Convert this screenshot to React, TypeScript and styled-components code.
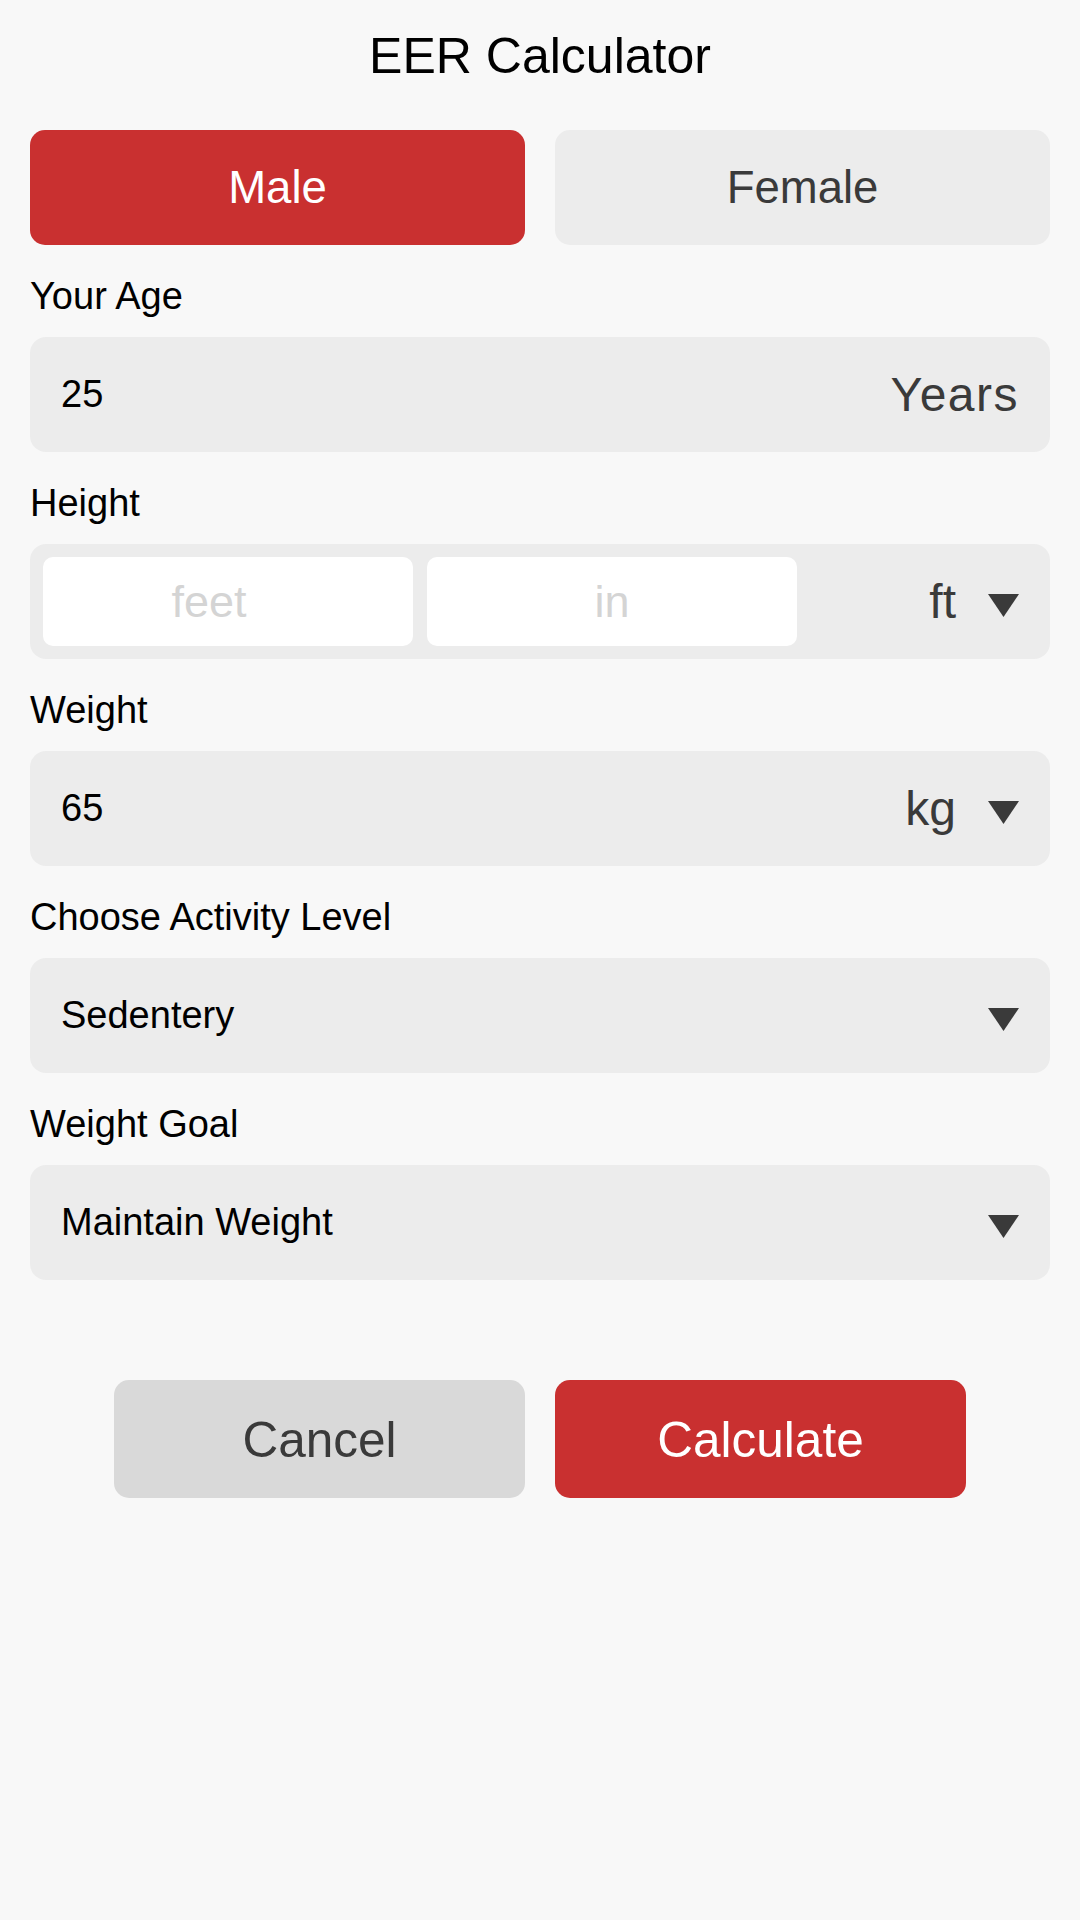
import React from "react";
import styled, { createGlobalStyle } from "styled-components";

const GlobalStyle = createGlobalStyle`
  html, body {
    margin: 0;
    padding: 0;
    background: #f8f8f8;
    font-family: "Liberation Sans", Arial, sans-serif;
  }
  * { box-sizing: border-box; }
`;

const Page = styled.div`
  min-height: 1920px;
  padding: 0 30px;
  background: #f8f8f8;
`;

const Title = styled.h1`
  margin: 0;
  padding-top: 26px;
  font-size: 50px;
  line-height: 60px;
  font-weight: 400;
  text-align: center;
  color: #000;
`;

const GenderRow = styled.div`
  margin-top: 44px;
  display: grid;
  grid-template-columns: 1fr 1fr;
  gap: 30px;
  height: 115px;
`;

const GenderButton = styled.button<{ $active?: boolean }>`
  border: none;
  border-radius: 15px;
  font-family: inherit;
  font-size: 45.5px;
  background: ${(p) => (p.$active ? "#c93030" : "#ececec")};
  color: ${(p) => (p.$active ? "#ffffff" : "#3a3a3a")};
  padding: 0;
`;

const Label = styled.div`
  margin-top: 29px;
  font-size: 38px;
  line-height: 44px;
  color: #000;
`;

const FieldBox = styled.div<{ $inset?: boolean }>`
  margin-top: 19px;
  height: 115px;
  border-radius: 16px;
  background: #ececec;
  display: flex;
  align-items: center;
  padding: ${(p) => (p.$inset ? "13px 31px 13px 13px" : "0 31px 0 31px")};
  gap: ${(p) => (p.$inset ? "14px" : "0")};
`;

const ValueInput = styled.input`
  flex: 1;
  min-width: 0;
  border: none;
  background: transparent;
  outline: none;
  padding: 0;
  font-family: inherit;
  font-size: 38px;
  color: #000;
`;

const SelectText = styled.span`
  flex: 1;
  font-size: 38px;
  color: #000;
`;

const SubInput = styled.input<{ $shift?: number }>`
  width: 370px;
  height: 89px;
  border: none;
  outline: none;
  border-radius: 10px;
  background: #ffffff;
  font-family: inherit;
  font-size: 45px;
  text-align: center;
  padding: 0 ${(p) => p.$shift ?? 0}px 0 0;
  color: #000;
  &::placeholder {
    color: #d4d4d4;
  }
`;

const UnitGroup = styled.div`
  margin-left: auto;
  display: flex;
  align-items: center;
  gap: 32px;
`;

const Unit = styled.span<{ $spaced?: boolean }>`
  font-size: 48px;
  color: #3a3a3a;
  letter-spacing: ${(p) => (p.$spaced ? "1.5px" : "0")};
`;

const CaretSvg = styled.svg`
  display: block;
  margin-top: 7px;
  flex: none;
`;

const Caret = () => (
  <CaretSvg width="31" height="23" viewBox="0 0 31 23">
    <polygon points="0,0 31,0 15.5,23" fill="#3a3a3a" />
  </CaretSvg>
);

const Actions = styled.div`
  margin-top: 100px;
  display: flex;
  justify-content: center;
  gap: 30px;
`;

const ActionButton = styled.button<{ $primary?: boolean }>`
  width: 411px;
  height: 118px;
  border: none;
  border-radius: 15px;
  padding: 0;
  font-family: inherit;
  font-size: 49.5px;
  background: ${(p) => (p.$primary ? "#c93030" : "#d9d9d9")};
  color: ${(p) => (p.$primary ? "#ffffff" : "#3a3a3a")};
`;

export default function App() {
  return (
    <>
      <GlobalStyle />
      <Page>
        <Title>EER Calculator</Title>
        <GenderRow>
          <GenderButton $active>Male</GenderButton>
          <GenderButton>Female</GenderButton>
        </GenderRow>

        <Label>Your Age</Label>
        <FieldBox>
          <ValueInput defaultValue="25" />
          <Unit $spaced>Years</Unit>
        </FieldBox>

        <Label>Height</Label>
        <FieldBox $inset>
          <SubInput placeholder="feet" $shift={38} />
          <SubInput placeholder="in" />
          <UnitGroup>
            <Unit>ft</Unit>
            <Caret />
          </UnitGroup>
        </FieldBox>

        <Label>Weight</Label>
        <FieldBox>
          <ValueInput defaultValue="65" />
          <UnitGroup>
            <Unit>kg</Unit>
            <Caret />
          </UnitGroup>
        </FieldBox>

        <Label>Choose Activity Level</Label>
        <FieldBox>
          <SelectText>Sedentery</SelectText>
          <Caret />
        </FieldBox>

        <Label>Weight Goal</Label>
        <FieldBox>
          <SelectText>Maintain Weight</SelectText>
          <Caret />
        </FieldBox>

        <Actions>
          <ActionButton>Cancel</ActionButton>
          <ActionButton $primary>Calculate</ActionButton>
        </Actions>
      </Page>
    </>
  );
}
